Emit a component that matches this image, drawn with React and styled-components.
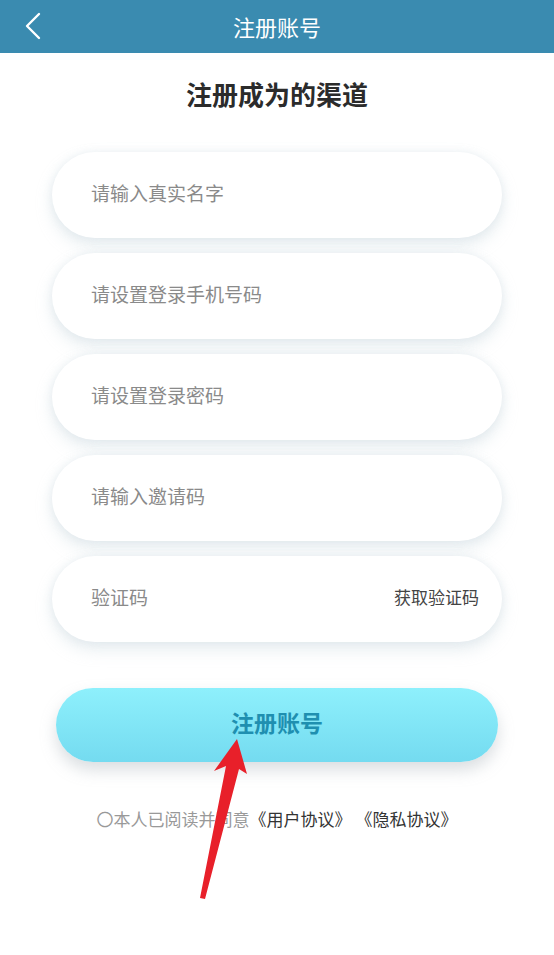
import React from "react";
import styled, { createGlobalStyle } from "styled-components";

const GlobalStyle = createGlobalStyle`
  html, body {
    margin: 0;
    padding: 0;
    background: #fff;
  }
  body {
    font-family: "Noto Sans CJK SC", "Noto Sans", sans-serif;
  }
`;

const Page = styled.div`
  position: relative;
  width: 554px;
  min-height: 955px;
  background: #fff;
  overflow: hidden;
`;

const TopBar = styled.header`
  height: 53px;
  background-color: #3a8bb0;
  display: flex;
  align-items: center;
  justify-content: center;
  position: relative;
  color: #fff;
  font-size: 22px;
  line-height: 1;
  padding-bottom: 2px;
  box-sizing: border-box;
`;

const BackBtn = styled.button`
  position: absolute;
  left: 14px;
  top: 6px;
  width: 40px;
  height: 40px;
  padding: 0;
  border: 0;
  background: none;
  cursor: pointer;
  display: flex;
  align-items: center;
  justify-content: center;
`;

const Heading = styled.h1`
  margin: 26px 0 0;
  font-size: 26px;
  line-height: 30px;
  font-weight: 700;
  color: #2b2b2b;
  text-align: center;
`;

const Form = styled.div`
  display: flex;
  flex-direction: column;
  gap: 15px;
  margin: 43px 52px 0;
`;

const Field = styled.div`
  height: 86px;
  box-sizing: border-box;
  border-radius: 43px;
  background: #fff;
  box-shadow: 0 8px 16px rgba(190, 205, 215, 0.35), 0 0 10px rgba(200, 212, 222, 0.3);
  display: flex;
  align-items: center;
  justify-content: space-between;
  padding: 0 23px 5px 39px;
`;

const Input = styled.input`
  flex: 1;
  min-width: 0;
  padding: 0;
  border: 0;
  outline: none;
  background: transparent;
  font-family: inherit;
  font-size: 19px;
  line-height: 24px;
  color: #333;
  &::placeholder {
    color: #8a8a8a;
  }
`;

const CodeLink = styled.span`
  font-size: 17px;
  line-height: 24px;
  color: #444;
  white-space: nowrap;
`;

const Submit = styled.button`
  display: block;
  margin: 46px 56px 0;
  width: 442px;
  height: 74px;
  padding: 0 0 6px;
  border: 0;
  border-radius: 37px;
  background: linear-gradient(180deg, #8ef0fc 0%, #74dbf0 100%);
  box-shadow: 0 8px 16px rgba(150, 160, 170, 0.35);
  font-family: inherit;
  font-size: 23px;
  line-height: 1;
  font-weight: 700;
  color: #1f8fb0;
  cursor: pointer;
`;

const Agreement = styled.p`
  margin: 46px 0 0;
  text-align: center;
  font-size: 17px;
  line-height: 22px;
  color: #999;
  white-space: pre;
`;

const Doc = styled.span`
  color: #333;
`;

const Pointer = styled.svg`
  position: absolute;
  left: 0;
  top: 0;
  pointer-events: none;
`;

const fields = [
  { id: "name", placeholder: "请输入真实名字" },
  { id: "phone", placeholder: "请设置登录手机号码" },
  { id: "pwd", placeholder: "请设置登录密码", type: "password" },
  { id: "invite", placeholder: "请输入邀请码" },
];

const App = () => {
  return (
    <Page>
      <GlobalStyle />
      <TopBar>
        <BackBtn aria-label="返回">
          <svg width="40" height="40" viewBox="14 6 40 40">
            <path d="M39 14 L27 26 L39 38" fill="none" stroke="#fff" strokeWidth="2.4" strokeLinecap="round" strokeLinejoin="round" />
          </svg>
        </BackBtn>
        注册账号
      </TopBar>

      <Heading>注册成为的渠道</Heading>

      <Form>
        {fields.map((f) => (
          <Field key={f.id}>
            <Input type={f.type || "text"} placeholder={f.placeholder} />
          </Field>
        ))}
        <Field>
          <Input placeholder="验证码" />
          <CodeLink>获取验证码</CodeLink>
        </Field>
      </Form>

      <Submit>注册账号</Submit>

      <Agreement>
        〇本人已阅读并同意<Doc>{"《用户协议》 《隐私协议》"}</Doc>
      </Agreement>

      {/* red annotation arrow */}
      <Pointer width="554" height="955">
        <polygon
          points="237,739 247,774 239,769 205,899 200,898 226,766 214,771"
          fill="#e8202a"
        />
      </Pointer>
    </Page>
  );
};

export default App;
